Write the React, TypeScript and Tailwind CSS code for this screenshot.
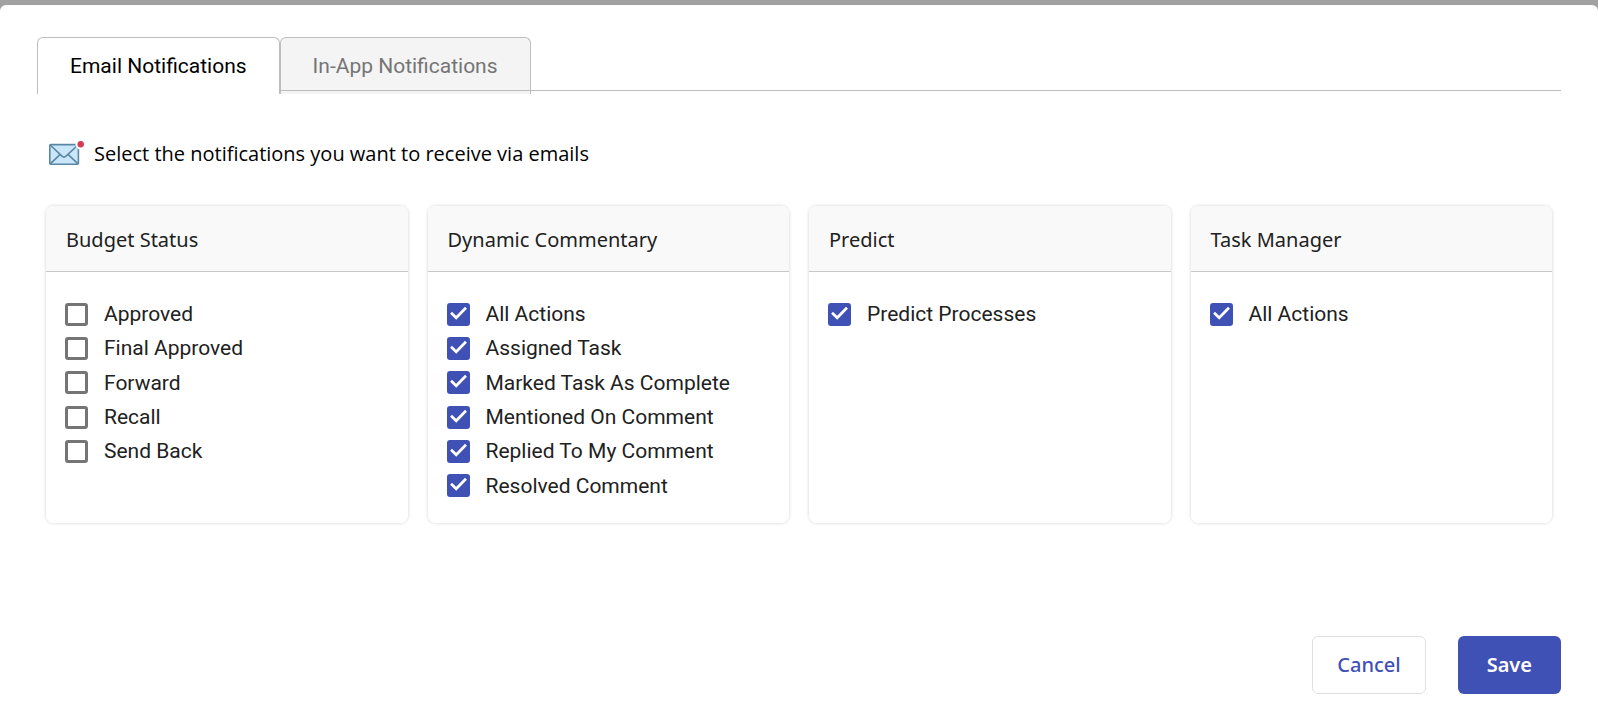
import { useState } from "react";

type Option = { label: string; checked: boolean };
type Group = { title: string; options: Option[] };

const groups: Group[] = [
  {
    title: "Budget Status",
    options: [
      { label: "Approved", checked: false },
      { label: "Final Approved", checked: false },
      { label: "Forward", checked: false },
      { label: "Recall", checked: false },
      { label: "Send Back", checked: false },
    ],
  },
  {
    title: "Dynamic Commentary",
    options: [
      { label: "All Actions", checked: true },
      { label: "Assigned Task", checked: true },
      { label: "Marked Task As Complete", checked: true },
      { label: "Mentioned On Comment", checked: true },
      { label: "Replied To My Comment", checked: true },
      { label: "Resolved Comment", checked: true },
    ],
  },
  { title: "Predict", options: [{ label: "Predict Processes", checked: true }] },
  { title: "Task Manager", options: [{ label: "All Actions", checked: true }] },
];

function MailIcon() {
  return (
    <svg width="36" height="26" viewBox="0 0 36 26" fill="none" aria-hidden="true">
      <rect x="0.8" y="3.6" width="28.6" height="19.6" rx="1" fill="#c9e6fa" stroke="#5b87a5" strokeWidth="1.6" />
      <path
        d="M1.2 4 13 15.2Q15 17 17 15.2L29 4M1.2 22.8 11.2 13.4M29 22.8 19 13.4"
        stroke="#5b87a5"
        strokeWidth="1.6"
      />
      <circle cx="31.7" cy="3.3" r="5.2" fill="#ffffff" />
      <circle cx="31.7" cy="3.3" r="3.2" fill="#d63a55" />
    </svg>
  );
}

function CheckOption({ label, checked }: Option) {
  const [on, setOn] = useState(checked);
  return (
    <label className="flex cursor-pointer items-center gap-4">
      <span className="grid size-[23px] shrink-0 place-items-center">
        <input
          type="checkbox"
          checked={on}
          onChange={() => setOn(!on)}
          className="peer col-start-1 row-start-1 size-full appearance-none rounded-[3px] border-3 border-[#757575] bg-white checked:border-[#3f51b5] checked:bg-[#3f51b5]"
        />
        <svg
          viewBox="0 0 24 24"
          aria-hidden="true"
          className="pointer-events-none invisible col-start-1 row-start-1 size-full peer-checked:visible"
        >
          <path fill="none" stroke="#ffffff" strokeWidth="2.8" d="M4.2 10.2 9.6 15.4 19.8 5" />
        </svg>
      </span>
      <span className="font-['Roboto',sans-serif] text-[21px] leading-6 text-[#212121]">{label}</span>
    </label>
  );
}

function GroupCard({ title, options }: Group) {
  return (
    <fieldset aria-label={title} className="min-w-0 overflow-hidden rounded-lg bg-white shadow-[0_0_3px_1px_#e4e4e4]">
      <div className="border-b border-[#c8c8c8] bg-[#f9f9f9] px-5 pt-5 pb-[17px]">
        <h2 className="text-xl leading-7">{title}</h2>
      </div>
      <div className="px-[19px] pt-[25px] pb-5">
        <div className="grid h-[206px] grid-rows-6">
          {options.map((o) => (
            <CheckOption key={o.label} {...o} />
          ))}
        </div>
      </div>
    </fieldset>
  );
}

export default function App() {
  return (
    <div className="min-h-screen bg-[#a1a1a1] pt-[5px] font-['Noto_Sans',sans-serif] text-[#212121]">
      <main className="flex min-h-[calc(100vh-5px)] flex-col rounded-t-md bg-white px-[37px] pt-8 pb-[21px]">
        <div role="tablist" className="relative flex font-['Roboto',sans-serif] text-[21px] leading-6">
          <div className="absolute inset-x-0 bottom-[3px] z-10 h-px bg-[#bdbdbd]" />
          <button
            type="button"
            role="tab"
            aria-selected="true"
            className="relative z-20 rounded-t-md border border-b-0 border-[#bdbdbd] bg-white px-8 py-4 text-black"
          >
            Email Notifications
          </button>
          <button
            type="button"
            role="tab"
            aria-selected="false"
            className="rounded-t-md border border-b-0 border-[#bdbdbd] bg-[#f4f4f4] px-8 py-4 text-[#757575]"
          >
            In-App Notifications
          </button>
        </div>

        <div className="mt-[46px] flex items-center gap-[9px] px-3">
          <MailIcon />
          <p className="font-['Open_Sans',sans-serif] text-xl leading-7 text-black">
            Select the notifications you want to receive via emails
          </p>
        </div>

        <div className="mt-[38px] grid grid-cols-4 gap-5 px-[9px]">
          {groups.map((g) => (
            <GroupCard key={g.title} {...g} />
          ))}
        </div>

        <div className="mt-auto flex justify-end gap-8 text-xl leading-7 font-medium">
          <button type="button" className="rounded-md border border-[#e0e0e0] bg-white px-6 py-[14px] text-[#3f51b5]">
            Cancel
          </button>
          <button type="button" className="rounded-md bg-[#3f51b5] px-[29px] py-[15px] font-semibold text-white">
            Save
          </button>
        </div>
      </main>
    </div>
  );
}
